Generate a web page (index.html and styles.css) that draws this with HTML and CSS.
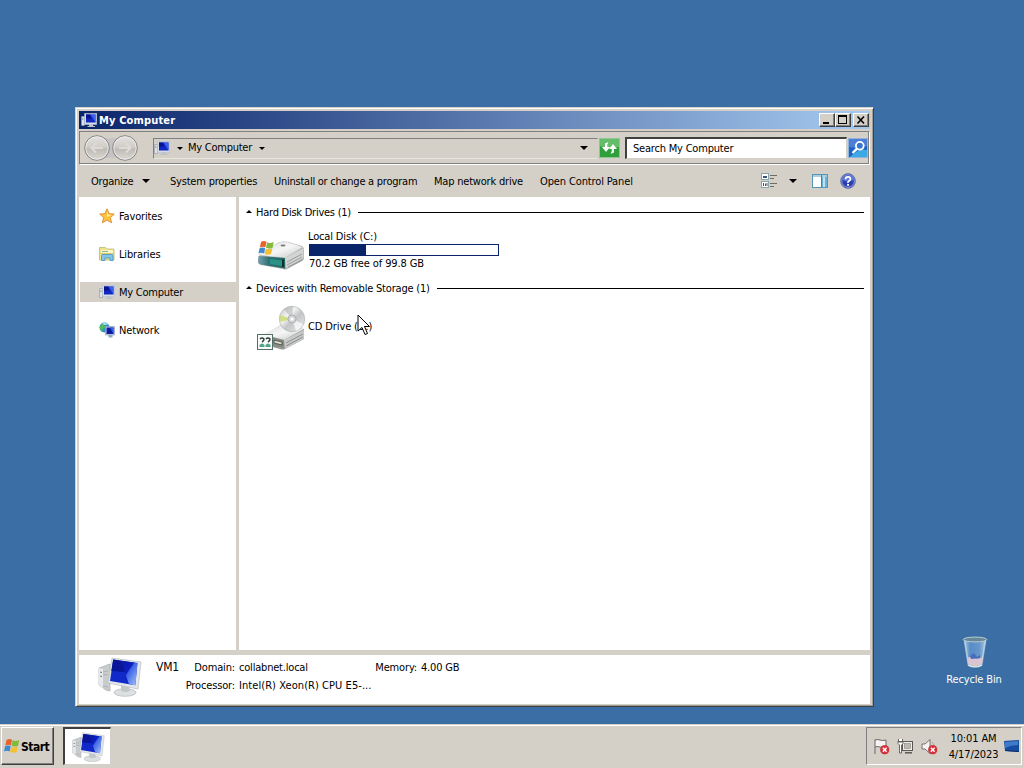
FILE: index.html
```html
<!DOCTYPE html>
<html lang="en">
<head>
<meta charset="utf-8">
<title>My Computer</title>
<link rel="stylesheet" href="styles.css">
</head>
<body>
<svg class="defs" width="0" height="0">
  <defs>
    <linearGradient id="screen" x1="0" y1="0" x2="1" y2="1"><stop offset="0" stop-color="#0a19a0"/><stop offset=".42" stop-color="#0b1fc4"/><stop offset=".46" stop-color="#3c62e4"/><stop offset="1" stop-color="#a9c6fb"/></linearGradient>
    <linearGradient id="metal" x1="0" y1="0" x2="1" y2="1"><stop offset="0" stop-color="#d9dad9"/><stop offset=".5" stop-color="#f6f6f6"/><stop offset="1" stop-color="#c3c5c4"/></linearGradient>
    <linearGradient id="teal" x1="0" y1="0" x2="1" y2="0"><stop offset="0" stop-color="#7d9fae"/><stop offset=".4" stop-color="#2d7178"/><stop offset="1" stop-color="#20695f"/></linearGradient>
    <linearGradient id="disc" x1="0" y1="0" x2="1" y2="1"><stop offset="0" stop-color="#bfc1c3"/><stop offset=".35" stop-color="#f4f4f4"/><stop offset=".55" stop-color="#c3c5c6"/><stop offset="1" stop-color="#ececec"/></linearGradient>
    <linearGradient id="round" x1="0" y1="0" x2="0" y2="1"><stop offset="0" stop-color="#e4e2df"/><stop offset=".46" stop-color="#d0cdc8"/><stop offset=".54" stop-color="#bebbb6"/><stop offset="1" stop-color="#dddad6"/></linearGradient>
    <linearGradient id="glass" x1="0" y1="0" x2="1" y2="0"><stop offset="0" stop-color="#b9d3ea"/><stop offset=".3" stop-color="#5b8fc9"/><stop offset=".7" stop-color="#6c9dd2"/><stop offset="1" stop-color="#c5d8e4"/></linearGradient>
    <symbol id="flag4" viewBox="0 0 16 16">
      <path d="M2.500 2Q5 .3 8 1.800L6.900 7.300Q4 6 1.300 7.500z" fill="#e8622c"/>
      <path d="M8.600 2.200Q11.500 3.700 15.300 2L14 7.900Q10.600 9.200 7.500 7.700z" fill="#84b93c"/>
      <path d="M1.100 8.200Q3.800 6.800 6.700 8.100L5.600 13.500Q2.800 12.200 0 13.600z" fill="#3d8ad4"/>
      <path d="M7.300 8.400Q10.300 10 13.800 8.600L12.600 14Q9.400 15.500 6.200 13.900z" fill="#f3c132"/>
    </symbol>
    <symbol id="pc" viewBox="0 0 44 40">
      <path d="M1 11L12 7V34L8 33L1 28z" fill="#c9cccd" stroke="#a7abad" stroke-width=".7"/>
      <path d="M1 11L5 12V31L1 28z" fill="#e6e8e9"/>
      <path d="M2 15l2 .5M2 19l2 .5" stroke="#6f7b80" stroke-width="1"/>
      <path d="M5 15l5-1M5 18l5-.5M5 29l5 1" stroke="#a0a5a7" stroke-width=".7"/>
      <ellipse cx="27" cy="35.500" rx="11" ry="3.800" fill="#dde0e1" stroke="#b4b8ba" stroke-width=".7"/>
      <path d="M23 27h8l1 7q-5 2-9 0z" fill="#c2c7c9"/>
      <path d="M14 1L43 5L40 32L10 26z" fill="#e3e7ea" stroke="#b8bec2" stroke-width=".7"/>
      <path d="M15.200 2.600L39.500 6L37.300 28.300L12 24z" fill="#1029c8"/>
      <path d="M23 3.700L39.500 6L37.300 28.300L31 27.200z" fill="url(#screen)"/>
      <path d="M15.200 2.600L23 3.700L27 15L13.300 14z" fill="#0a1598"/>
    </symbol>
    <symbol id="pc-small" viewBox="0 0 16 16">
      <path d="M.5 4.500h3v9h-3z" fill="#dfe3e6" stroke="#8f979c" stroke-width=".6"/>
      <path d="M1.200 7h1.200" stroke="#567" stroke-width="1"/>
      <path d="M8 12h4v2h2v1H6.500v-1H8z" fill="#bcc3c8"/>
      <rect x="3.700" y="1.500" width="12" height="11" fill="#d5dce6" stroke="#b4bfcc" stroke-width=".6"/>
      <rect x="5" y="2.500" width="9.500" height="8" fill="#1027c0"/>
      <path d="M9.500 2.500h5v8z" fill="#3d60ec"/>
      <path d="M5 2.500h4.300l1 4H5z" fill="#081392"/>
    </symbol>
    <symbol id="no" viewBox="0 0 9 9">
      <circle cx="4.500" cy="4.500" r="4.200" fill="#d83038" stroke="#b6353b" stroke-width=".5"/>
      <path d="M2.700 2.700l3.600 3.600M6.300 2.700L2.700 6.300" stroke="#fff" stroke-width="1.400"/>
    </symbol>
  </defs>
</svg>

<div class="desktop">
  <section class="window">
    <header class="titlebar">
      <svg class="title-icon" width="16" height="16"><use href="#pc-small"/></svg>
      <h1 class="title">My Computer</h1>
      <div class="buttons">
        <span class="btn"><svg width="14" height="12"><path d="M3 8h6v2H3z"/></svg></span>
        <span class="btn"><svg width="14" height="12"><path d="M2 1h9v9H2zM3 3v6h7V3z" fill-rule="evenodd"/></svg></span>
        <span class="btn close"><svg width="14" height="12"><path d="M3.500 2.500l6.500 7M10 2.500l-6.500 7" stroke="#000" stroke-width="1.600"/></svg></span>
      </div>
    </header>

    <nav class="addressbar">
      <svg class="navs" width="54" height="28" viewBox="0 0 54 28">
        <path d="M13 2Q27 7 41 2V26Q27 21 13 26z" fill="#c3c2c4"/>
        <circle cx="13" cy="14" r="12.300" fill="url(#round)" stroke="#858481"/>
        <circle cx="41" cy="14" r="12.300" fill="url(#round)" stroke="#858481"/>
        <circle cx="13" cy="14" r="11.200" fill="none" stroke="#efedeb" stroke-width=".8"/>
        <circle cx="41" cy="14" r="11.200" fill="none" stroke="#efedeb" stroke-width=".8"/>
        <path d="M19 14H8M12 9.500L7.500 14L12 18.500M35 14h11M42 9.500l4.500 4.500l-4.500 4.500" fill="none" stroke="#dedbd7" stroke-width="2"/>
      </svg>
      <div class="crumbs">
        <svg class="crumb-icon" width="16" height="16"><use href="#pc-small"/></svg>
        <i class="arrow small"></i>
        <span class="t crumb">My Computer</span>
        <i class="arrow small"></i>
        <i class="arrow drop"></i>
      </div>
      <svg class="refresh" width="21" height="20" viewBox="0 0 21 20">
        <rect x=".5" y=".5" width="20" height="19" fill="#2da03c" stroke="#8cc695"/>
        <path d="M1 1h19v8Q10 12 1 8z" fill="#64bd68"/>
        <path d="M9.500 4L6 5.500V9H3l4 5 4-5H8.300V6.500zM11.500 16l3.500-1.500V11h3l-4-5-4 5h2.700v2.500z" fill="#fff"/>
      </svg>
      <div class="search"><span class="t">Search My Computer</span></div>
      <svg class="go" width="20" height="20" viewBox="0 0 20 20">
        <rect x=".5" y=".5" width="19" height="19" fill="#1e62c4" stroke="#91b3dc"/>
        <path d="M1 1h18v7Q10 11 1 9z" fill="#4c7ed6"/>
        <path d="M2 19Q10 10 19 12v7z" fill="#3ca8e4"/>
        <circle cx="11.800" cy="7.800" r="3.900" fill="#3476d2" stroke="#fff" stroke-width="1.800"/>
        <path d="M8.800 10.800L4.500 15" stroke="#fff" stroke-width="2.400"/>
      </svg>
    </nav>

    <div class="toolbar">
      <span class="t w-org">Organize</span><i class="arrow big"></i>
      <span class="t w-sys">System properties</span>
      <span class="t w-un">Uninstall or change a program</span>
      <span class="t w-map">Map network drive</span>
      <span class="t w-open">Open Control Panel</span>
      <svg class="view" width="16" height="16" viewBox="0 0 16 16">
        <rect x=".5" y=".5" width="7" height="6" fill="#fff" stroke="#8ba5ae"/><path d="M2 4h4" stroke="#365779" stroke-width="2"/>
        <rect x=".5" y="8.500" width="7" height="6" fill="#fff" stroke="#8ba5ae"/><path d="M2.500 10v3M4.500 10.500v2.500M6 10v3" stroke="#555"/>
        <path d="M9 2.500h7M9 5.500h4M9 10.500h7M9 13.500h4" stroke="#6d6b67"/>
      </svg>
      <i class="arrow big viewdrop"></i>
      <svg class="pane" width="16" height="14" viewBox="0 0 16 14">
        <rect x=".5" y=".5" width="15" height="13" fill="#fff" stroke="#5795b8"/><path d="M1 2h14" stroke="#aacde0" stroke-width="2"/>
        <path d="M10 3h5v10h-5z" fill="#69b2d6"/><path d="M11 3h2v10h-2z" fill="#bde2f1"/><path d="M9.500 1v12" stroke="#517d99"/>
      </svg>
      <svg class="help" width="16" height="16" viewBox="0 0 16 16">
        <circle cx="8" cy="8" r="7.400" fill="#2c3fae" stroke="#777fa9"/><circle cx="8" cy="8" r="6.300" fill="none" stroke="#a4b3ef" stroke-width=".8"/>
        <path d="M2.300 7a5.800 5.800 0 0 1 11.400 0Q8 9.500 2.300 7z" fill="#5b78db"/>
        <path d="M5.600 6.200Q5.600 3.800 8 3.800T10.400 6Q10.400 7.300 9 8T8 10" fill="none" stroke="#fff" stroke-width="1.700"/><path d="M7.100 11h1.900v1.800H7.100z" fill="#fff"/>
      </svg>
    </div>

    <div class="main">
      <aside class="tree">
        <div class="node">
          <svg width="16" height="16" viewBox="0 0 16 16"><path d="M8 .8l2.100 4.800 5.200.5-3.900 3.500 1.200 5.200L8 12.100l-4.600 2.700 1.200-5.200L.7 6.100l5.200-.5z" fill="#ffc23a" stroke="#d98a3c" stroke-width=".9"/><path d="M8 3l1.300 3.600 3 .4L8 9z" fill="#ffe9a0"/></svg>
          <span class="t">Favorites</span>
        </div>
        <div class="node">
          <svg width="16" height="16" viewBox="0 0 16 16"><path d="M.5 1.500h6l1 1.500h7.500v11H.5z" fill="#eee28f" stroke="#beb968" stroke-width=".8"/><path d="M2 4h12v3H2z" fill="#fbf7cf"/><path d="M3 5.500h6" stroke="#82bd74"/><path d="M1 7.500h14" stroke="#d9cb70"/><path d="M2.500 14.500V9.500Q2.500 8.500 4 8.500h8.500q1.500 0 1.500 1v5h-3v-2.500H5.800v2.500z" fill="#83c5e6" stroke="#4a92bd" stroke-width=".8"/></svg>
          <span class="t">Libraries</span>
        </div>
        <div class="node selected">
          <svg width="16" height="16"><use href="#pc-small"/></svg>
          <span class="t w-mc">My Computer</span>
        </div>
        <div class="node">
          <svg width="16" height="16" viewBox="0 0 16 16"><circle cx="5.500" cy="5.500" r="5" fill="#2e8fc4"/><path d="M1 4Q3 .5 6 1L5 3.500 7 5 4 7 3 10Q.5 8 1 4z" fill="#53b960"/><path d="M3 2Q6 0 9 2.500L6 3z" fill="#bde4ee"/><path d="M6.500 4.500h9v8.500h-9z" fill="#ced9e9" stroke="#7f91b4" stroke-width=".6"/><path d="M7.500 5.500h7v6.500h-7z" fill="#0b1ca2"/><path d="M11 5.500h3.500V12z" fill="#385bea"/><path d="M9.500 13h4v2.500h-4z" fill="#8faabd"/></svg>
          <span class="t">Network</span>
        </div>
      </aside>
      <div class="files">
        <div class="group"><i class="tri"></i><span class="t w-hdd">Hard Disk Drives (1)</span><i class="rule"></i></div>
        <div class="drive">
          <svg width="48" height="30" viewBox="0 0 48 30">
            <path d="M2 16L21 3Q24 1 31 2L45 6Q47 7 47 11V18Q47 20 45 21L30 29Q28 30 26 29L4 25Q1 24 1 21z" fill="#a6a8a7"/>
            <path d="M2 15L21 3Q24 1 31 2L46 7L28 18z" fill="url(#metal)" stroke="#c7c8c7" stroke-width=".5"/>
            <path d="M28 18L46.500 8V18L29 28.500z" fill="#d3d5d4"/><path d="M30 22l15-8M30 25l15-8M31 27l14-7" stroke="#909493" stroke-width=".9"/>
            <path d="M1.500 16L28 18V28.500L4 24.500Q1 24 1 21z" fill="url(#teal)"/><path d="M13 19l12 1.500V26l-12-2z" fill="#2c9283"/><path d="M25 19.500h2V27h-2z" fill="#172f30"/>
            <ellipse cx="26" cy="5.500" rx="2.500" ry="1" fill="#767978"/>
            <use href="#flag4" x="1" y="0" width="17" height="16"/>
          </svg>
          <div class="info">
            <span class="t w-ld">Local Disk (C:)</span>
            <div class="meter"><div class="fill"></div></div>
            <span class="t w-free">70.2 GB free of 99.8 GB</span>
          </div>
        </div>
        <div class="group"><i class="tri"></i><span class="t w-dev">Devices with Removable Storage (1)</span><i class="rule"></i></div>
        <div class="drive cd">
          <svg width="49" height="45" viewBox="0 0 49 45">
            <path d="M3 31L24 19L47 23V33L28 43Q26 44 23 43L4 38z" fill="#989a99"/>
            <path d="M3 30L24 19L47 23L27 34z" fill="url(#metal)"/>
            <path d="M27 34L47 24V33L28 43z" fill="#c8cac9"/><path d="M29 37L46 28M29 40L46 31" stroke="#8b8e8c"/>
            <path d="M16 31L27 34V42L16 40z" fill="#888b82"/><path d="M17 34l8 2v3l-8-2z" fill="#d6d8c8" stroke="#424642" stroke-width=".8"/>
            <circle cx="35" cy="13" r="12.700" fill="url(#disc)" stroke="#b0b3b4" stroke-width=".7"/>
            <path d="M35 13L23 9Q22 12 23 16z" fill="#c9d868" opacity=".75"/><path d="M35 13L27 3Q31 0 36 .4z" fill="#a9adb0" opacity=".5"/><path d="M35 13L39 25Q44 23 46 18z" fill="#fff" opacity=".7"/>
            <circle cx="35" cy="13" r="4" fill="#d5d8d9" stroke="#aeb2b3"/><circle cx="35" cy="13" r="1.600" fill="#fff"/>
            <rect x=".5" y="28.500" width="15" height="15" fill="#f6faf8" stroke="#526e67"/>
            <path d="M3 33q2-2 4 0q0 2-2 3M9 33q2-2 4 0q0 2-2 3" fill="none" stroke="#303c39" stroke-width="1.500"/><path d="M2.500 39q2.500-3 5 0v2h-5zM8.500 39q2.500-3 5 0v2h-5z" fill="#50a489"/>
          </svg>
          <span class="t w-cd">CD Drive (D:)</span>
        </div>
      </div>
    </div>

    <footer class="details">
      <svg width="44" height="40"><use href="#pc"/></svg>
      <span class="t vm">VM1</span>
      <dl class="props">
        <dt class="t">Domain:</dt><dd class="t">collabnet.local</dd><dt class="t mem">Memory:</dt><dd class="t">4.00 GB</dd>
        <dt class="t">Processor:</dt><dd class="t wide">Intel(R) Xeon(R) CPU E5-...</dd>
      </dl>
    </footer>
  </section>

  <div class="recycle">
    <svg width="26" height="33" viewBox="0 0 26 33">
      <path d="M1.500 3L5.500 29Q13 34 20.500 29L24.500 3z" fill="url(#glass)" opacity=".9"/>
      <path d="M3 5L6.500 28M23 5L19.500 28" stroke="#b7cfdf" stroke-width="1.200"/>
      <path d="M5 22Q9 20 12 22T21 21L20 28Q13 32 6 28z" fill="#dbc5d3"/><path d="M8 20l4-3 3 4 3-2v3l-9 1z" fill="#496eb9"/>
      <path d="M6 29q7 3.500 14 0" stroke="#d6e5dc" fill="none" stroke-width="1.600"/>
      <ellipse cx="13" cy="3.500" rx="11.800" ry="2.400" fill="#65889a" stroke="#b9ced0"/>
    </svg>
    <span class="t">Recycle Bin</span>
  </div>
  <svg class="cursor" width="14" height="22" viewBox="0 0 14 22"><path d="M1 1V17L5 13.500L8 20.500L10.500 19.500L7.500 12.500H12.500z" fill="#fff" stroke="#000"/></svg>

  <div class="taskbar">
    <div class="start"><svg width="16" height="16"><use href="#flag4"/></svg><b>Start</b></div>
    <div class="task"><svg width="33" height="30"><use href="#pc"/></svg></div>
    <div class="tray">
      <svg width="17" height="17" viewBox="0 0 17 17"><path d="M2 1.500v14.500M2 2q3-1 5 0t6 0v7q-3 1-6 0T2 9" fill="#f4f3f1" stroke="#6a6764"/><use href="#no" x="7" y="7" width="9.500" height="9.500"/></svg>
      <svg width="17" height="17" viewBox="0 0 17 17"><rect x="5.500" y="3.500" width="10" height="9" fill="#f0eeea" stroke="#5b5854"/><rect x="7.500" y="5.500" width="6" height="5" fill="#bbb8b2" stroke="#8b8883" stroke-width=".6"/><path d="M8 14.800h7" stroke="#5b5854" stroke-width="1.500"/><path d="M1.500 1v3h4V1M1 3.500h5v2L4.500 7v8H2.500V7L1 5.500z" fill="#fff" stroke="#5b5854" stroke-width=".9"/></svg>
      <svg width="17" height="17" viewBox="0 0 17 17"><path d="M1 6h3l5-4.500v14L4 11H1z" fill="#f4f3f1" stroke="#77736f"/><path d="M11 4q2 1.500 2 4" fill="none" stroke="#aaa6a0"/><use href="#no" x="7" y="7" width="9.500" height="9.500"/></svg>
      <div class="clock"><span class="t w-time">10:01 AM</span><span class="t w-date">4/17/2023</span></div>
      <svg class="show" width="16" height="14" viewBox="0 0 16 14"><path d="M0 1L15 0V12L1 11z" fill="#174da0"/><path d="M1 2L14 1V5Q7 5 1 8z" fill="#3e7cc9"/><path d="M1 10.500l14 1" stroke="#102d67"/></svg>
    </div>
  </div>
</div>
</body>
</html>
```
FILE: styles.css
```css
* { box-sizing: border-box; }
body { margin: 0; font: 11px/14px "DejaVu Sans Condensed", "DejaVu Sans", sans-serif; font-stretch: condensed; color: #000; }
.defs { position: absolute; }
svg { display: block; flex: none; }
.desktop { position: relative; width: 1024px; height: 768px; overflow: hidden; background: #3a6ea5; }
.t { white-space: nowrap; letter-spacing: -.25px; transform: translateY(1px); }
.window { position: absolute; left: 75px; top: 107px; width: 799px; height: 600px; display: flex; flex-direction: column; padding: 2px; background: #d4d0c8; border: 1px solid; border-color: #d4d0c8 #404040 #404040 #d4d0c8; box-shadow: inset 1px 1px #fff, inset -1px -1px #a09d96; }
.titlebar { display: flex; align-items: center; height: 18px; margin: 1px 1px 0; padding: 0 1px 0 2px; background: linear-gradient(90deg, #0a246a, #a6caf0); }
.title { margin: 0 auto 0 2px; padding-top: 1px; font-size: 11px; line-height: 16px; letter-spacing: .15px; color: #fff; }
.buttons { display: flex; }
.btn { width: 16px; height: 14px; padding: 0; background: #d4d0c8; border: 1px solid; border-color: #fff #404040 #404040 #fff; box-shadow: inset -1px -1px #808080; }
.close { margin-left: 2px; }
.addressbar { display: flex; align-items: center; height: 34px; margin: 2px 1px 0; padding-left: 4px; border: 1px solid; border-color: #808080 #fff #fff #808080; box-shadow: inset -1px -1px #808080; }
.addressbar .t { transform: none; }
.crumbs { display: flex; align-items: center; width: 445px; height: 21px; margin: 0 1px 0 15px; padding-left: 0; border: 1px solid; border-color: #808080 #d4d0c8 #e8e6e1 #808080; }
.arrow { flex: none; border: 4px solid transparent; border-bottom: 0; border-top-color: #000; }
.arrow.small { border-width: 3px 3px 0; }
.crumb-icon { margin-right: 7px; }
.crumb { width: 65px; margin: 0 6px 0 5px; }
.drop { margin-left: auto; margin-right: 9px; }
.search { width: 222px; height: 22px; margin: 0 1px 0 5px; padding: 3px 6px; background: #fff; border: 1px solid; border-width: 2px 1px 1px 2px; border-color: #404040 #d4d0c8 #d4d0c8 #404040; }
.search .t { letter-spacing: -.2px; }
.toolbar { display: flex; align-items: center; height: 32px; padding: 0 15px 0 13px; }
.w-org { width: 51px; }
.w-sys { width: 104px; margin-left: 20px; letter-spacing: -.2px; }
.w-un { width: 160px; }
.w-map { width: 106px; letter-spacing: -.2px; }
.w-open { letter-spacing: -.13px; }
.view { margin-left: auto; }
.viewdrop { margin: 0 15px 0 12px; }
.pane { margin-right: 12px; }
.main { display: flex; height: 453px; margin: 0 1px; }
.tree { width: 157px; padding-top: 9px; background: #fff; }
.node { display: flex; align-items: center; height: 20px; margin: 0 0 18px 1px; padding-left: 19px; }
.node svg { margin-right: 4px; }
.tree .t { letter-spacing: -.15px; }
.tree .w-mc { letter-spacing: -.25px; }
.selected { background: #d4d0c8; }
.files { flex: 1; margin-left: 3px; padding: 8px 6px 0 8px; background: #fff; }
.group { display: flex; align-items: center; height: 14px; }
.tri { border: 3px solid transparent; border-top: 0; border-bottom-color: #000; margin: 0 4px 2px -1px; }
.rule { flex: 1; height: 1px; margin-left: 7px; background: #000; }
.w-dev { letter-spacing: -.2px; }
.drive { display: flex; height: 62px; padding: 10px 0 0 10px; }
.drive > svg { margin: 11px 3px 0 0; }
.info { display: flex; flex-direction: column; }
.meter { width: 190px; height: 12px; margin: 1px 0 0 1px; border: 1px solid #0a246a; background: #fff; }
.fill { width: 30%; height: 100%; background: #0a246a; }
.w-ld { letter-spacing: -.15px; }
.w-free { margin-left: 1px; letter-spacing: -.12px; }
.cd { padding: 11px 0 0 10px; }
.cd > svg { margin: 0 2px 0 0; }
.cd .t { margin-top: 13px; letter-spacing: -.12px; }
.details { display: flex; height: 49px; margin: 5px 1px 0; padding: 2px 0 0 19px; background: #fff; }
.vm { width: 28px; margin: 2px 0 0 14px; font-size: 12px; }
.props { display: grid; grid-template-columns: 51px 118px 56px 100px; column-gap: 4px; margin: 3px 0 0; row-gap: 4px; align-content: start; }
.props dt { justify-self: end; letter-spacing: -.15px; }
.props dd { margin: 0; letter-spacing: -.2px; }
.props .wide { grid-column: span 3; letter-spacing: .06px; }
.recycle { position: absolute; left: 938px; top: 636px; width: 72px; display: flex; flex-direction: column; align-items: center; color: #fff; }
.recycle svg { margin-left: 2px; }
.recycle .t { margin-top: 3px; letter-spacing: -.15px; }
.cursor { position: absolute; left: 357px; top: 314px; }
.taskbar { position: absolute; left: 0; bottom: 0; width: 1024px; height: 44px; display: flex; padding: 3px 2px 2px 1px; background: #d4d0c8; box-shadow: inset 0 1px #d4d0c8, inset 0 2px #fff; }
.start { display: flex; align-items: center; width: 53px; height: 38px; padding-left: 2px; border: 1px solid; border-color: #fff #404040 #404040 #fff; box-shadow: inset -1px -1px #808080; }
.start b { margin-left: 1px; padding-top: 2px; font-size: 12px; letter-spacing: -.5px; }
.task { width: 48px; height: 38px; margin-left: 9px; padding: 3px 0 0 7px; background: #fff; border: 1px solid; border-width: 2px 1px 1px 2px; border-color: #404040 #d4d0c8 #d4d0c8 #404040; }
.tray { display: flex; align-items: center; width: 156px; height: 38px; margin-left: auto; padding-left: 6px; gap: 7px; border: 1px solid; border-color: #808080 #fff #fff #808080; }
.clock { display: flex; flex-direction: column; align-items: center; width: 51px; margin-left: 3px; line-height: 16px; }
.clock .t { letter-spacing: -.12px; }
.show { margin: 2px 0 0 -2px; }
```
